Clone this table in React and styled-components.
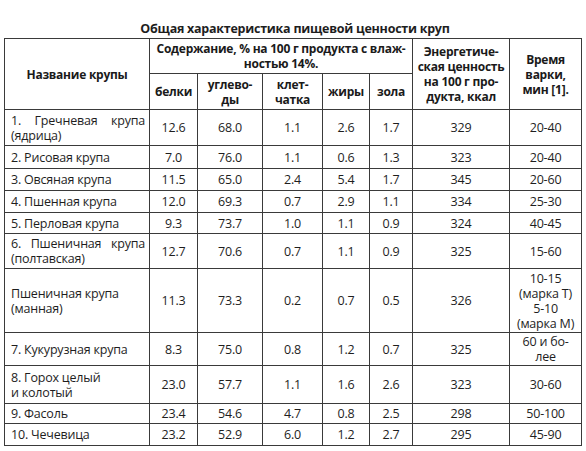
import React from 'react';
import styled, { createGlobalStyle } from 'styled-components';

const GlobalStyle = createGlobalStyle`
  html, body {
    margin: 0;
    padding: 0;
    background: #ffffff;
  }
  body {
    font-family: "Open Sans", "Noto Sans", sans-serif;
    color: #1e1e1e;
  }
`;

const Page = styled.div`
  width: 586px;
  height: 451px;
  padding: 20px 0 0 4px;
  box-sizing: border-box;
  overflow: hidden;
`;

const Title = styled.div`
  width: 577px;
  padding-left: 5px;
  box-sizing: border-box;
  text-align: center;
  font-weight: 700;
  font-size: 12.5px;
  letter-spacing: -0.25px;
  line-height: 18px;
  height: 18px;
`;

const Table = styled.table`
  width: 577px;
  table-layout: fixed;
  border-collapse: collapse;
  border: 1.5px solid #333;
  font-size: 12.5px;
  letter-spacing: -0.2px;
`;

const Row = styled.tr`
  height: ${({ h }) => h}px;
`;

const Th = styled.th`
  border: 1px solid #3a3a3a;
  padding: 0;
  font-weight: 700;
  font-size: 12px;
  letter-spacing: -0.25px;
  line-height: 15px;
  white-space: nowrap;
  text-align: center;
  vertical-align: middle;
  color: #1a1a1a;
`;

const Td = styled.td`
  border: 1px solid #3a3a3a;
  padding: 0 4px 0 ${({ name }) => (name ? '6px' : '4px')};
  line-height: 15px;
  text-align: ${({ name, justify }) => (justify ? 'justify' : name ? 'left' : 'center')};
  vertical-align: middle;
`;

const cols = [145, 48, 65, 60, 47, 43, 97, 72];

const rows = [
  { h: 36, name: '1. Гречневая крупа (ядрица)', justify: true, v: ['12.6', '68.0', '1.1', '2.6', '1.7', '329', '20-40'] },
  { h: 23, name: '2. Рисовая крупа', v: ['7.0', '76.0', '1.1', '0.6', '1.3', '323', '20-40'] },
  { h: 22, name: '3. Овсяная крупа', v: ['11.5', '65.0', '2.4', '5.4', '1.7', '345', '20-60'] },
  { h: 22, name: '4. Пшенная крупа', v: ['12.0', '69.3', '0.7', '2.9', '1.1', '334', '25-30'] },
  { h: 21, name: '5. Перловая крупа', v: ['9.3', '73.7', '1.0', '1.1', '0.9', '324', '40-45'] },
  { h: 35, name: '6. Пшеничная крупа (полтавская)', justify: true, v: ['12.7', '70.6', '0.7', '1.1', '0.9', '325', '15-60'] },
  { h: 64, name: 'Пшеничная крупа (манная)', v: ['11.3', '73.3', '0.2', '0.7', '0.5', '326', ['10-15', '(марка Т)', '5-10', '(марка М)']] },
  { h: 33, name: '7. Кукурузная крупа', v: ['8.3', '75.0', '0.8', '1.2', '0.7', '325', ['60 и бо-', 'лее']] },
  { h: 38, name: ['8. Горох целый', 'и колотый'], v: ['23.0', '57.7', '1.1', '1.6', '2.6', '323', '30-60'] },
  { h: 20, name: '9. Фасоль', v: ['23.4', '54.6', '4.7', '0.8', '2.5', '298', '50-100'] },
  { h: 22, name: '10. Чечевица', v: ['23.2', '52.9', '6.0', '1.2', '2.7', '295', '45-90'] },
];

const lines = (t) =>
  Array.isArray(t)
    ? t.map((l, i) => (
        <React.Fragment key={i}>
          {i > 0 && <br />}
          {l}
        </React.Fragment>
      ))
    : t;

export default function App() {
  return (
    <Page>
      <GlobalStyle />
      <Title>Общая характеристика пищевой ценности круп</Title>
      <Table>
        <colgroup>
          {cols.map((w, i) => (
            <col key={i} style={{ width: w }} />
          ))}
        </colgroup>
        <thead>
          <Row h={35}>
            <Th rowSpan={2}>Название крупы</Th>
            <Th colSpan={5}>{lines(['Содержание, % на 100 г продукта с влаж-', 'ностью 14%.'])}</Th>
            <Th rowSpan={2}>{lines(['Энергетиче-', 'ская ценность', 'на 100 г про-', 'дукта, ккал'])}</Th>
            <Th rowSpan={2}>{lines(['Время', 'варки,', 'мин [1].'])}</Th>
          </Row>
          <Row h={36}>
            <Th>белки</Th>
            <Th>{lines(['углево-', 'ды'])}</Th>
            <Th>{lines(['клет-', 'чатка'])}</Th>
            <Th>жиры</Th>
            <Th>зола</Th>
          </Row>
        </thead>
        <tbody>
          {rows.map((r, i) => (
            <Row key={i} h={r.h}>
              <Td name justify={r.justify}>{lines(r.name)}</Td>
              {r.v.map((c, j) => (
                <Td key={j}>{lines(c)}</Td>
              ))}
            </Row>
          ))}
        </tbody>
      </Table>
    </Page>
  );
}
